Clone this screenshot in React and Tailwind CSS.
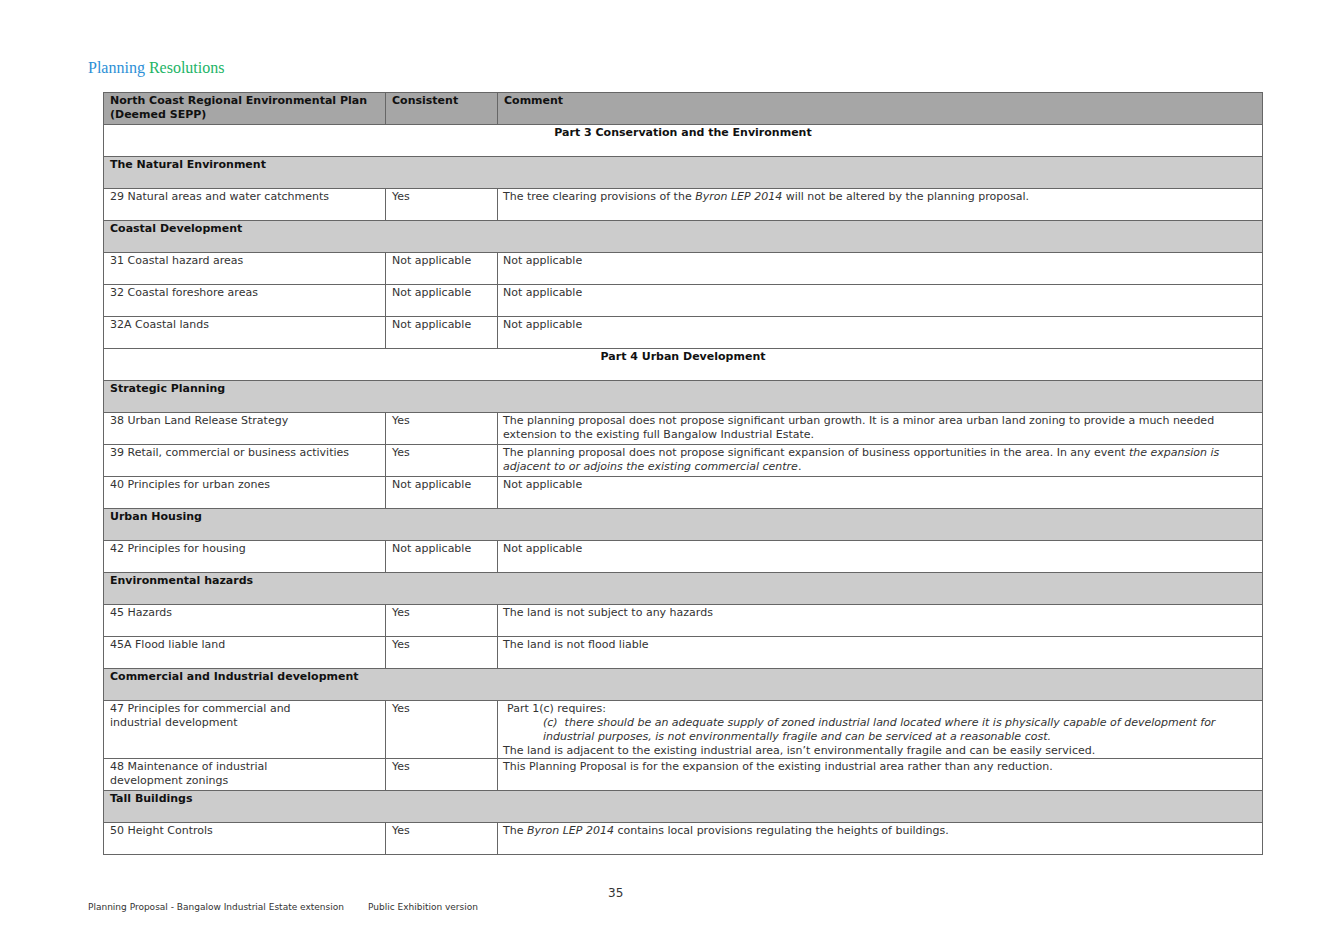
import React from 'react';

const rows = [
  { part: 'Part 3 Conservation and the Environment' },
  { section: 'The Natural Environment' },
  { a: '29 Natural areas and water catchments', b: 'Yes', c: <>The tree clearing provisions of the <i>Byron LEP 2014</i> will not be altered by the planning proposal.</> },
  { section: 'Coastal Development' },
  { a: '31 Coastal hazard areas', b: 'Not applicable', c: 'Not applicable' },
  { a: '32 Coastal foreshore areas', b: 'Not applicable', c: 'Not applicable' },
  { a: '32A Coastal lands', b: 'Not applicable', c: 'Not applicable' },
  { part: 'Part 4 Urban Development' },
  { section: 'Strategic Planning' },
  { a: '38 Urban Land Release Strategy', b: 'Yes', c: 'The planning proposal does not propose significant urban growth.  It is a minor area urban land zoning to provide a much needed extension to the existing full Bangalow Industrial Estate.' },
  { a: '39 Retail, commercial or business activities', b: 'Yes', c: <>The planning proposal does not propose significant expansion of business opportunities in the area.  In any event <i>the expansion is adjacent to or adjoins the existing commercial centre</i>.</> },
  { a: '40 Principles for urban zones', b: 'Not applicable', c: 'Not applicable' },
  { section: 'Urban Housing' },
  { a: '42 Principles for housing', b: 'Not applicable', c: 'Not applicable' },
  { section: 'Environmental hazards' },
  { a: '45 Hazards', b: 'Yes', c: 'The land is not subject to any hazards' },
  { a: '45A Flood liable land', b: 'Yes', c: 'The land is not flood liable' },
  { section: 'Commercial and Industrial development' },
  {
    a: <>47 Principles for commercial and<br />industrial development</>, b: 'Yes', h: 'h-[55px]',
    c: (
      <>
        <div className="pl-[4px]">Part 1(c) requires:</div>
        <div className="pl-[40px] italic">(c)&nbsp; there should be an adequate supply of zoned industrial land located where it is physically capable of development for industrial purposes, is not environmentally fragile and can be serviced at a reasonable cost.</div>
        <div>The land is adjacent to the existing industrial area, isn’t environmentally fragile and can be easily serviced.</div>
      </>
    ),
  },
  { a: <>48 Maintenance of industrial<br />development zonings</>, b: 'Yes', c: 'This Planning Proposal is for the expansion of the existing industrial area rather than any reduction.' },
  { section: 'Tall Buildings' },
  { a: '50 Height Controls', b: 'Yes', c: <>The <i>Byron LEP 2014</i> contains local provisions regulating the heights of buildings.</> },
];

export default function App() {
  return (
    <div className="relative w-[1340px] h-[947px] bg-white text-[#333] leading-[14px]" style={{ fontFamily: '"DejaVu Sans", Verdana, sans-serif' }}>
      <div className="pt-[58px] pl-[88px] text-[16px] leading-[20px]" style={{ fontFamily: 'Georgia, "Liberation Serif", serif' }}>
        <span className="text-[#2c8fd6]">Planning</span> <span className="text-[#22b466]">Resolutions</span>
      </div>
      <table className="ml-[103px] mt-[14px] w-[1160px] table-fixed border-collapse text-[11px]">
        <colgroup>
          <col className="w-[282px]" />
          <col className="w-[112px]" />
          <col />
        </colgroup>
        <tbody>
          <tr className="h-[32px] bg-[#a6a6a6] font-bold text-[#111]">
            <td className="border border-[#666] align-top px-[6px] pt-[1px]">North Coast Regional Environmental Plan (Deemed SEPP)</td>
            <td className="border border-[#666] align-top px-[6px] pt-[1px]">Consistent</td>
            <td className="border border-[#666] align-top px-[6px] pt-[1px]">Comment</td>
          </tr>
          {rows.map((r, i) => {
            if (r.part)
              return (
                <tr key={i} className="h-[32px]">
                  <td colSpan={3} className="border border-[#666] align-top text-center font-bold text-[#111] pt-[1px]">{r.part}</td>
                </tr>
              );
            if (r.section)
              return (
                <tr key={i} className="h-[32px] bg-[#cccccc]">
                  <td colSpan={3} className="border border-[#666] align-top font-bold text-[#111] px-[6px] pt-[1px]">{r.section}</td>
                </tr>
              );
            return (
              <tr key={i} className={r.h || 'h-[32px]'}>
                <td className="border border-[#666] align-top px-[6px] pt-[1px]">{r.a}</td>
                <td className="border border-[#666] align-top px-[6px] pt-[1px]">{r.b}</td>
                <td className="border border-[#666] align-top pl-[5px] pr-[14px] pt-[1px]">{r.c}</td>
              </tr>
            );
          })}
        </tbody>
      </table>
      <div className="absolute left-[608px] top-[886px] text-[12px]">35</div>
      <div className="absolute left-[88px] top-[900px] text-[9px] flex gap-[24px]">
        <span>Planning Proposal - Bangalow Industrial Estate extension</span>
        <span>Public Exhibition version</span>
      </div>
    </div>
  );
}
